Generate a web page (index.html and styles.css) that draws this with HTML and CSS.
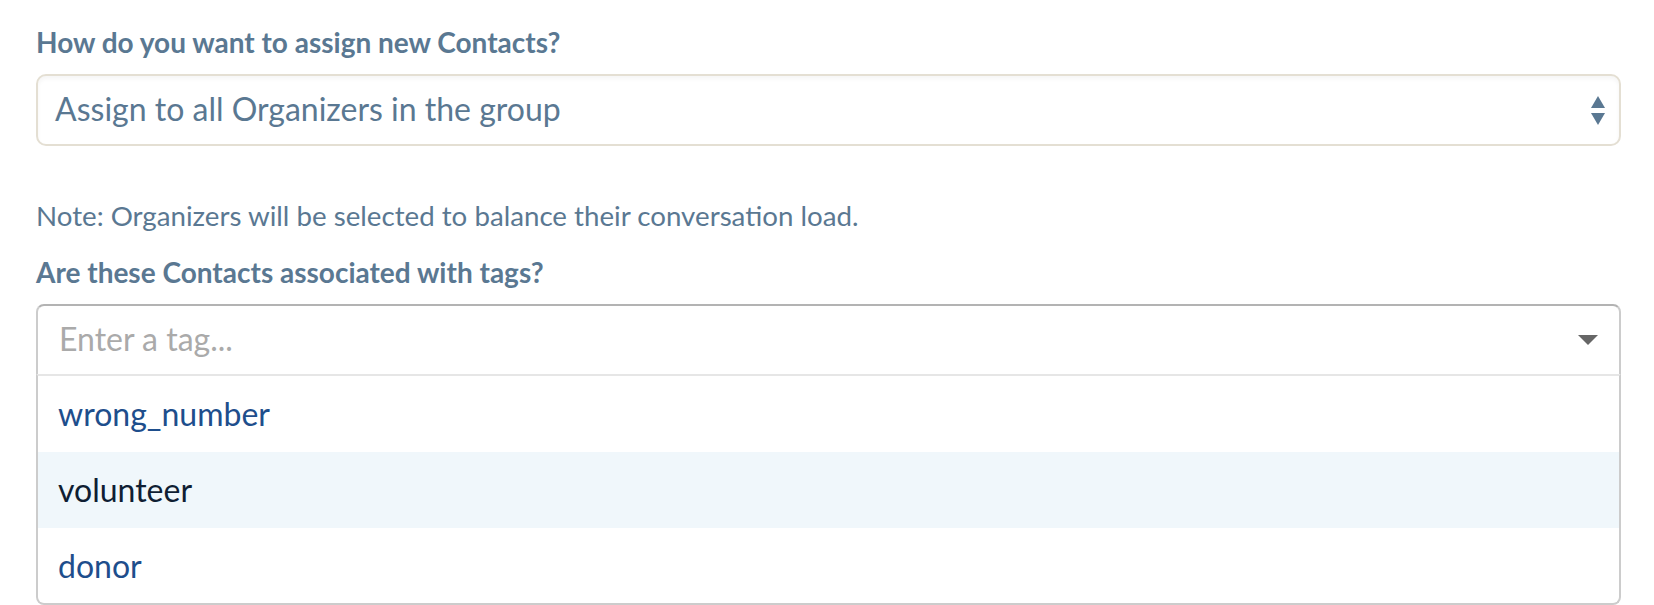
FILE: index.html
```html
<!DOCTYPE html>
<html lang="en">
<head>
<meta charset="utf-8">
<title>Assign Contacts</title>
<link rel="stylesheet" href="styles.css">
</head>
<body>
<form class="form">
  <div class="field-label">How do you want to assign new Contacts?</div>
  <div class="select">
    <span class="select-value">Assign to all Organizers in the group</span>
    <span class="select-arrows">
      <svg width="14" height="29" viewBox="0 0 14 29" aria-hidden="true">
        <polygon points="7,0 14,12 0,12" fill="#5a7892"/>
        <polygon points="0,17 14,17 7,29" fill="#5a7892"/>
      </svg>
    </span>
  </div>
  <p class="note">Note: Organizers will be selected to balance their conversation load.</p>
  <div class="field-label">Are these Contacts associated with tags?</div>
  <div class="tag-select">
    <div class="tag-control">
      <span class="placeholder">Enter a tag...</span>
      <span class="tag-arrow"></span>
    </div>
    <div class="tag-menu">
      <div class="tag-option">wrong_number</div>
      <div class="tag-option is-focused">volunteer</div>
      <div class="tag-option">donor</div>
    </div>
  </div>
</form>
</body>
</html>
```
FILE: styles.css
```css
html, body {
  margin: 0;
  padding: 0;
  background: #ffffff;
}
body {
  font-family: Lato, "Open Sans", "Liberation Sans", sans-serif;
  overflow: hidden;
  height: 605px;
}
.form {
  padding: 22px 33px 0 36px;
  margin: 0;
}
.field-label {
  font-size: 28px;
  line-height: 40px;
  font-weight: 700;
  color: #5a7892;
}
.select {
  margin-top: 12px;
  height: 72px;
  box-sizing: border-box;
  border: 2px solid #e4dfd3;
  border-radius: 10px;
  box-shadow: inset 0 3px 4px rgba(0, 0, 0, 0.04);
  display: flex;
  align-items: center;
  justify-content: space-between;
  padding: 0 14px 2px 17px;
}
.select-value {
  font-size: 32px;
  line-height: 1.2;
  color: #5a7892;
}
.select-arrows {
  display: flex;
  padding-top: 2px;
}
.note {
  margin: 52px 0 18px 0;
  font-size: 27.7px;
  line-height: 36px;
  color: #5a7892;
}
.tag-select {
  margin-top: 12px;
}
.tag-control {
  height: 70px;
  box-sizing: border-box;
  border: 2px solid;
  border-color: #b3b3b3 #cccccc transparent;
  border-bottom: 0;
  border-radius: 8px 8px 0 0;
  display: flex;
  align-items: center;
  justify-content: space-between;
  padding: 0 21px 2px 21px;
}
.placeholder {
  font-size: 32px;
  line-height: 1.2;
  color: #aaaaaa;
}
.tag-arrow {
  width: 0;
  height: 0;
  border-style: solid;
  border-width: 10px 10px 0 10px;
  border-color: #666666 transparent transparent transparent;
  margin-top: 2px;
}
.tag-menu {
  border: 2px solid #cccccc;
  border-top-color: #e6e6e6;
  border-radius: 0 0 8px 8px;
  max-height: 227px;
  overflow: hidden;
}
.tag-option {
  height: 76px;
  display: flex;
  align-items: center;
  padding: 0 20px;
  font-size: 32px;
  line-height: 1.2;
  color: #1e4e8c;
}
.tag-option.is-focused {
  background: #f0f7fb;
  color: #0f1e33;
}
```
